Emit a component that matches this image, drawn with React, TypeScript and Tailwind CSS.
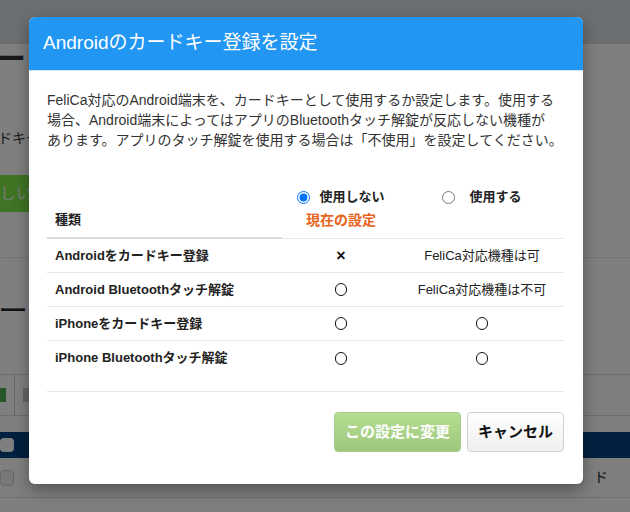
const font = "font-['Liberation_Sans','Noto_Sans_CJK_JP',sans-serif]";

const rows = [
  { name: "Androidをカードキー登録", off: "×", on: "FeliCa対応機種は可" },
  { name: "Android Bluetoothタッチ解錠", off: "○", on: "FeliCa対応機種は不可" },
  { name: "iPhoneをカードキー登録", off: "○", on: "○" },
  { name: "iPhone Bluetoothタッチ解錠", off: "○", on: "○" },
];

/** ○ / × の記号。○は線で描く。 */
function Mark({ value }: { value: string }) {
  if (value === "○") {
    return <span aria-label="○" className="block h-[13px] w-[12px] rounded-full border-[1.5px] border-[#111]" />;
  }
  if (value === "×") {
    return <span className="text-[16px] font-bold text-[#111]">×</span>;
  }
  return <span>{value}</span>;
}

/** 背景のページ（オーバーレイの下に見える部分）。 */
function BackgroundPage() {
  return (
    <div className="flex h-full flex-col bg-white">
      <div className="h-[44px] bg-[#d9dee3]" />
      <div className="ml-[-4px] h-[40px] text-[30px] leading-[30px] font-bold text-[#333]">ー</div>
      <div className="mt-[46px] ml-[-2px] text-[14px] leading-[16px] text-[#333]">ドキー</div>
      <div className="mt-[29px] ml-[-52px] flex h-[37px] w-[120px] items-center justify-end rounded pr-[36px] text-[16px] text-[#e8f5e0] bg-[#7fe84a]">
        新しい
      </div>
      <div className="mt-[45px] h-px bg-[#e6e6e6]" />
      <div className="mt-[38px] ml-[-2px] text-[30px] leading-[30px] text-[#222]">ード</div>
      <div className="mt-[48px] flex h-[42px] items-center gap-[8px] border-y border-[#dcdcdc]">
        <span className="h-[14px] w-[6px] bg-[#4caf50]" />
        <span className="h-full w-px bg-[#d0d0d0]" />
        <span className="h-[14px] w-[8px] bg-[#c8c8c8]" />
      </div>
      <div className="mt-[16px] flex h-[26px] items-center bg-[#04407e]">
        <span className="h-[14px] w-[14px] rounded-sm bg-white" />
      </div>
      <div className="flex h-[40px] items-center border-b border-[#e0e0e0]">
        <span className="h-[16px] w-[14px] rounded-sm border border-[#ccc] bg-[#f0f0f0]" />
        <span className="ml-auto mr-[22px] text-[14px] text-[#222]">ド</span>
      </div>
    </div>
  );
}

export default function App() {
  return (
    <div className={`relative h-[512px] w-[630px] overflow-hidden ${font}`}>
      <BackgroundPage />
      <div className="absolute inset-0 bg-black/50">
        <div className="mt-[17px] ml-[29px] w-[554px] rounded-[6px] bg-white shadow-[0_6px_16px_rgba(0,0,0,0.35)]">
          <div className="flex h-[54px] items-center rounded-t-[6px] border-b border-[#d4e8fb] bg-[#2196f3] px-[14px] text-[19px] text-white">
            Androidのカードキー登録を設定
          </div>

          <div className="px-[18px] pt-[19px] pr-[19px]">
            <p className="text-[14px] leading-[20px] text-[#333]">
              FeliCa対応のAndroid端末を、カードキーとして使用するか設定します。使用する
              <br />
              場合、Android端末によってはアプリのBluetoothタッチ解錠が反応しない機種が
              <br />
              あります。アプリのタッチ解錠を使用する場合は「不使用」を設定してください。
            </p>

            <div className="mt-[33px] grid grid-cols-[235px_118px_1fr] text-[13px] text-[#222]">
              <div className="flex items-end border-b-2 border-[#dadada] px-[8px] pb-[7px] font-bold leading-[20px]">
                種類
              </div>
              <div className="flex flex-col items-center border-b border-[#e6e6e6] pt-[4px] pb-[8px]">
                <label className="flex h-[20px] items-center gap-[9px] font-bold">
                  <input type="radio" name="use" defaultChecked className="m-0 h-[13px] w-[13px]" />
                  使用しない
                </label>
                <span className="mt-[3px] text-[14px] leading-[20px] font-bold text-[#e8641b]">現在の設定</span>
              </div>
              <div className="flex flex-col items-center border-b border-[#e6e6e6] pt-[4px] pb-[8px]">
                <label className="flex h-[20px] items-center gap-[14px] font-bold">
                  <input type="radio" name="use" className="m-0 h-[13px] w-[13px]" />
                  使用する
                </label>
              </div>

              {rows.map((r, i) => {
                const line = i < rows.length - 1 ? "border-b border-[#e6e6e6]" : "";
                return [
                  <div key={`a${i}`} className={`flex h-[34px] items-center px-[8px] font-bold ${line}`}>
                    {r.name}
                  </div>,
                  <div key={`b${i}`} className={`flex h-[34px] items-center justify-center ${line}`}>
                    <Mark value={r.off} />
                  </div>,
                  <div key={`c${i}`} className={`flex h-[34px] items-center justify-center ${line}`}>
                    <Mark value={r.on} />
                  </div>,
                ];
              })}
            </div>

            <div className="mt-[16px] h-px bg-[#e6e6e6]" />

            <div className="flex justify-end gap-[6px] pt-[20px] pb-[32px]">
              <button className="h-[40px] w-[127px] rounded-[4px] border border-[#a6cd8c] bg-gradient-to-b from-[#b6de92] to-[#9ec67e] text-[15px] font-bold text-white">
                この設定に変更
              </button>
              <button className="h-[40px] w-[97px] rounded-[4px] border border-[#cfcfcf] bg-gradient-to-b from-white to-[#efefef] text-[15px] font-bold text-[#111]">
                キャンセル
              </button>
            </div>
          </div>
        </div>
      </div>
    </div>
  );
}
